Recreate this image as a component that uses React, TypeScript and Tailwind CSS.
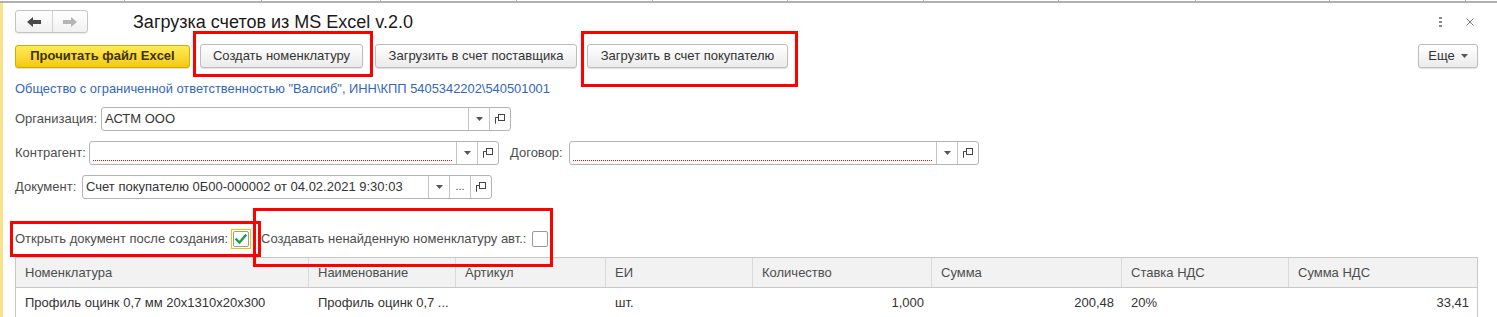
import React from 'react';

const TAB_TICKS = [125, 137, 119, 136, 136, 135, 136, 135, 137, 134, 136];

const COLUMNS = [
  { w: 'w-[293px]', label: 'Номенклатура' },
  { w: 'w-[147px]', label: 'Наименование' },
  { w: 'w-[150px]', label: 'Артикул' },
  { w: 'w-[147px]', label: 'ЕИ' },
  { w: 'w-[179px]', label: 'Количество' },
  { w: 'w-[190px]', label: 'Сумма' },
  { w: 'w-[167px]', label: 'Ставка НДС' },
  { w: 'flex-1', label: 'Сумма НДС' },
];

const ROW = [
  { text: 'Профиль оцинк 0,7 мм 20x1310x20x300', right: false },
  { text: 'Профиль оцинк 0,7 ...', right: false },
  { text: '', right: false },
  { text: 'шт.', right: false },
  { text: '1,000', right: true },
  { text: '200,48', right: true },
  { text: '20%', right: false },
  { text: '33,41', right: true },
];

function Arrow({ dir, color }: { dir: 'left' | 'right'; color: string }) {
  return (
    <svg width="14" height="10" viewBox="0 0 14 10" className={dir === 'right' ? 'rotate-180' : ''}>
      <path d="M0 5 L6 0 V3 H14 V7 H6 V10 Z" fill={color} />
    </svg>
  );
}

function Caret() {
  return (
    <svg width="7" height="4" viewBox="0 0 7 4">
      <path d="M0 0 H7 L3.5 4 Z" fill="#555" />
    </svg>
  );
}

function CopyIcon() {
  return (
    <svg width="12" height="12" viewBox="0 0 12 12" fill="none" stroke="#444" strokeWidth="1">
      <rect x="4.5" y="1.5" width="6" height="6" />
      <path d="M4.5 4.5 H1.5 V10.5 M1.5 4.5 V10.5" />
    </svg>
  );
}

function FieldButton({ children }: { children: React.ReactNode }) {
  return (
    <div className="w-[21px] h-full border-l border-[#c4c4c4] flex items-center justify-center shrink-0">
      {children}
    </div>
  );
}

function Field({ value, invalid, withDots }: { value?: string; invalid?: boolean; withDots?: boolean }) {
  return (
    <div className="w-[410px] h-[24px] flex border border-[#b3b3b3] rounded-[3px] bg-white">
      <div className="relative flex-1 flex items-center pl-[3px] text-[#333] text-[13px] whitespace-nowrap overflow-hidden">
        {value}
        {invalid && <div className="absolute left-[3px] right-[4px] bottom-[3px] border-b border-dotted border-[#ff0000]" />}
      </div>
      <FieldButton><Caret /></FieldButton>
      {withDots && <FieldButton><span className="text-[11px] text-[#444] leading-none -mt-[2px]">...</span></FieldButton>}
      <FieldButton><CopyIcon /></FieldButton>
    </div>
  );
}

function Button({ children, className = '' }: { children: React.ReactNode; className?: string }) {
  return (
    <button className={`h-[24px] rounded-[3px] border border-[#bdbdbd] bg-gradient-to-b from-white to-[#ebebeb] shadow-[0_1px_1px_rgba(0,0,0,0.12)] text-[13px] text-[#333] flex items-center justify-center ${className}`}>
      {children}
    </button>
  );
}

export default function App() {
  return (
    <div className="relative w-[1497px] h-[317px] overflow-hidden bg-white font-['Liberation_Sans',Arial,sans-serif] text-[13px] text-[#4d4d4d] flex flex-col">
      {/* tab strip remnant */}
      <div className="h-[3px] shrink-0 flex border-b-2 border-[#b0b0b0]">
        {TAB_TICKS.map((w, i) => (
          <div key={i} style={{ width: w }} className="h-full border-r border-[#b0b0b0]" />
        ))}
      </div>

      <div className="flex flex-1 min-h-0">
        <div className="w-[3px] shrink-0 bg-[#f8e38c]" />

        <div className="flex-1 min-w-0 pl-[12px] pr-[19px] pt-[7px] flex flex-col">
          {/* header */}
          <div className="h-[23px] flex items-center">
            <div className="w-[73px] h-[23px] flex border border-[#c4c4c4] rounded-[3px] bg-gradient-to-b from-white to-[#f1f1f1] shadow-[0_1px_1px_rgba(0,0,0,0.08)]">
              <div className="w-[37px] flex items-center justify-center border-r border-[#d2d2d2]">
                <Arrow dir="left" color="#4a4a4a" />
              </div>
              <div className="flex-1 flex items-center justify-center">
                <Arrow dir="right" color="#b5b5b5" />
              </div>
            </div>
            <div className="ml-[45px] text-[18px] text-[#1a1a1a] leading-none">Загрузка счетов из MS Excel v.2.0</div>
            <div className="ml-auto flex items-center gap-[24px] pr-[4px]">
              <div className="flex flex-col gap-[2px]">
                <span className="w-[3px] h-[2px] bg-[#888]" />
                <span className="w-[3px] h-[2px] bg-[#888]" />
                <span className="w-[3px] h-[2px] bg-[#888]" />
              </div>
              <svg width="8" height="8" viewBox="0 0 8 8" stroke="#777" strokeWidth="1">
                <path d="M0.5 0.5 L7.5 7.5 M7.5 0.5 L0.5 7.5" />
              </svg>
            </div>
          </div>

          {/* command bar */}
          <div className="mt-[11px] h-[24px] flex items-center">
            <button className="w-[175px] h-[23px] rounded-[3px] border border-[#cfae00] bg-gradient-to-b from-[#ffeb55] to-[#f3c900] shadow-[0_1px_1px_rgba(0,0,0,0.15)] text-[13px] font-bold text-[#3d3300] flex items-center justify-center">
              Прочитать файл Excel
            </button>
            <Button className="ml-[10px] w-[163px]">Создать номенклатуру</Button>
            <Button className="ml-[12px] w-[202px]">Загрузить в счет поставщика</Button>
            <Button className="ml-[10px] w-[201px]">Загрузить в счет покупателю</Button>
            <Button className="ml-auto w-[60px] gap-[6px]">
              <span>Еще</span>
              <Caret />
            </Button>
          </div>

          <div className="mt-[13px] h-[16px] leading-[16px] text-[#3465c0] text-[12.9px]">
            Общество с ограниченной ответственностью "Валсиб", ИНН\КПП 5405342202\540501001
          </div>

          {/* fields */}
          <div className="mt-[10px] flex items-center">
            <div className="w-[86px]">Организация:</div>
            <Field value="АСТМ ООО" />
          </div>
          <div className="mt-[10px] flex items-center">
            <div className="w-[74px]">Контрагент:</div>
            <Field invalid />
            <div className="ml-[11px] w-[59px]">Договор:</div>
            <Field invalid />
          </div>
          <div className="mt-[10px] flex items-center">
            <div className="w-[67px]">Документ:</div>
            <Field value="Счет покупателю 0Б00-000002 от 04.02.2021 9:30:03" withDots />
          </div>

          {/* checkboxes */}
          <div className="mt-[30px] h-[20px] flex items-center">
            <div className="w-[216px]">Открыть документ после создания:</div>
            <div className="w-[20px] h-[20px] border border-[#f2c200] flex items-center justify-center">
              <div className="w-[16px] h-[16px] border border-[#9a9a9a] rounded-[2px] bg-white flex items-center justify-center">
                <svg width="12" height="11" viewBox="0 0 12 11" fill="none" stroke="#1a9c45" strokeWidth="2.4" strokeLinecap="square">
                  <path d="M1.5 5.5 L4.5 8.5 L10.5 1.5" />
                </svg>
              </div>
            </div>
            <div className="ml-[10px] w-[271px]">Создавать ненайденную номенклатуру авт.:</div>
            <div className="w-[16px] h-[16px] border border-[#9a9a9a] rounded-[2px] bg-white" />
          </div>

          {/* table */}
          <div className="mt-[8px] flex-1 flex flex-col border-x border-t border-[#c8c8c8]">
            <div className="h-[30px] flex bg-[#f2f2f2] border-b border-[#c8c8c8]">
              {COLUMNS.map((c, i) => (
                <div
                  key={c.label}
                  className={`${c.w} shrink-0 flex items-center pl-[9px] ${i < COLUMNS.length - 1 ? 'border-r border-[#dadada]' : ''}`}
                >
                  {c.label}
                </div>
              ))}
            </div>
            <div className="h-[30px] flex text-[#333]">
              {ROW.map((c, i) => (
                <div
                  key={i}
                  className={`${COLUMNS[i].w} shrink-0 flex items-center whitespace-nowrap ${c.right ? 'justify-end pr-[8px]' : 'pl-[9px]'}`}
                >
                  {c.text}
                </div>
              ))}
            </div>
          </div>
        </div>
      </div>

      {/* red annotation frames */}
      <div className="absolute left-[193px] top-[31px] w-[180px] h-[46px] border-[3px] border-[#ff0000]" />
      <div className="absolute left-[581px] top-[31px] w-[217px] h-[56px] border-[3px] border-[#ff0000]" />
      <div className="absolute left-[10px] top-[221px] w-[251px] h-[36px] border-[3px] border-[#ff0000]" />
      <div className="absolute left-[253px] top-[208px] w-[300px] h-[59px] border-[3px] border-[#ff0000]" />
    </div>
  );
}
